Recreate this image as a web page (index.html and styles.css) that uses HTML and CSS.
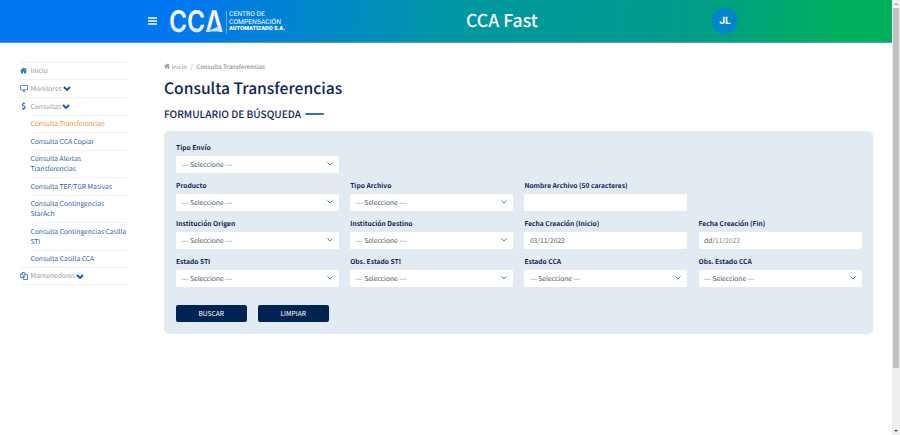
FILE: index.html
```
<!DOCTYPE html>
<html lang="es">
<head>
<meta charset="utf-8">
<title>CCA Fast</title>
<link rel="stylesheet" href="styles.css">
</head>
<body>
<svg class="defs" width="0" height="0">
  <symbol id="home" viewBox="0 0 16 14"><path d="M8 0 0 7l1 1.3L8 2.2l7 6.1L16 7l-2.500-2.200V1h-2v2zM8 3.500 2.500 8.300V14h4V9.500h3V14h4V8.300z" fill="currentColor"/></symbol>
  <symbol id="chev" viewBox="0 0 14 9"><path d="M1.500 2 7 7l5.500-5" fill="none" stroke="currentColor" stroke-width="3.600"/></symbol>
  <symbol id="thin" viewBox="0 0 6 4"><path d="M.7.7 3 3 5.300.7" fill="none" stroke="currentColor" stroke-width="1" stroke-linecap="round"/></symbol>
</svg>
<div class="app">
  <div class="page">
    <header class="header">
      <svg class="burger" viewBox="0 0 9 8"><path d="M0 1h9M0 4h9M0 7h9" stroke="#fff" stroke-width="1.500"/></svg>
      <svg class="logo" viewBox="0 0 54 26">
        <defs><linearGradient id="silver" x1="0" y1="0" x2="0" y2="1"><stop offset=".45" stop-color="#fff"/><stop offset="1" stop-color="#cbd5e3"/></linearGradient></defs>
        <text x="-1" y="23.500" textLength="54" lengthAdjust="spacingAndGlyphs" fill="url(#silver)">CCΛ</text>
        <path d="M37 23.500 47 19l3.500 4.500z" fill="#d5dce6"/>
      </svg>
      <div class="logo-text"><span>CENTRO DE</span><span>COMPENSACIÓN</span><b>AUTOMATIZADO S.A.</b></div>
      <div class="brand">CCA Fast</div>
      <div class="avatar">JL</div>
    </header>
    <div class="body">
      <nav class="side">
        <div class="item"><svg class="ic"><use href="#home"/></svg>Inicio</div>
        <div class="item"><svg class="ic monitor" viewBox="0 0 9 8"><path d="M.5.5h8v5h-8zM3 7.300h3M4.500 5.500v2" fill="none" stroke="currentColor" stroke-width=".8"/></svg>Monitores<svg class="chev"><use href="#chev"/></svg></div>
        <div class="item"><span class="ic dollar">$</span>Consultas<svg class="chev"><use href="#chev"/></svg></div>
        <div class="sub">
          <a class="on">Consulta Transferencias</a>
          <a>Consulta CCA Copiar</a>
          <a>Consulta Alertas<br>Transferencias</a>
          <a>Consulta TEF/TGR Masivas</a>
          <a>Consulta Contingencias<br>StarAch</a>
          <a>Consulta Contingencias Casilla<br>STI</a>
          <a>Consulta Casilla CCA</a>
        </div>
        <div class="item last"><svg class="ic copy" viewBox="0 0 8 8"><path d="M4.500 5.500H.5V2.300L2.300.5h2.200V2M.5 2.500h2v-2M3.200 4 5 2.200h2.500v5.300H3.200zM3.200 4.200H5v-2" fill="none" stroke="currentColor" stroke-width=".7"/></svg>Mantenedores<svg class="chev"><use href="#chev"/></svg></div>
      </nav>
      <main class="main">
        <div class="crumbs"><svg><use href="#home"/></svg><span>Inicio</span><i>/</i><b>Consulta Transferencias</b></div>
        <h1>Consulta Transferencias</h1>
        <h2>FORMULARIO DE BÚSQUEDA<span class="dash"></span></h2>
        <form class="panel">
          <div class="grid">
            <div class="field first"><label>Tipo Envío</label><div class="box">--- Seleccione ---<svg><use href="#thin"/></svg></div></div>
            <div class="field"><label>Producto</label><div class="box">--- Seleccione ---<svg><use href="#thin"/></svg></div></div>
            <div class="field"><label>Tipo Archivo</label><div class="box">--- Seleccione ---<svg><use href="#thin"/></svg></div></div>
            <div class="field wide"><label>Nombre Archivo (50 caracteres)</label><div class="box"></div></div>
            <div class="field"><label>Institución Origen</label><div class="box">--- Seleccione ---<svg><use href="#thin"/></svg></div></div>
            <div class="field"><label>Institución Destino</label><div class="box">--- Seleccione ---<svg><use href="#thin"/></svg></div></div>
            <div class="field"><label>Fecha Creación (Inicio)</label><div class="box">03/11/2023</div></div>
            <div class="field"><label>Fecha Creación (Fin)</label><div class="box">dd/<span class="dim">11/2023</span></div></div>
            <div class="field"><label>Estado STI</label><div class="box">--- Seleccione ---<svg><use href="#thin"/></svg></div></div>
            <div class="field"><label>Obs. Estado STI</label><div class="box">--- Seleccione ---<svg><use href="#thin"/></svg></div></div>
            <div class="field"><label>Estado CCA</label><div class="box">--- Seleccione ---<svg><use href="#thin"/></svg></div></div>
            <div class="field"><label>Obs. Estado CCA</label><div class="box">--- Seleccione ---<svg><use href="#thin"/></svg></div></div>
          </div>
          <div class="actions"><span class="btn">BUSCAR</span><span class="btn">LIMPIAR</span></div>
        </form>
      </main>
    </div>
  </div>
  <div class="scroll"><svg viewBox="0 0 4 2"><path d="M0 2 2 0l2 2z" fill="#999"/></svg><div class="thumb"></div><svg viewBox="0 0 4 2"><path d="M0 0h4L2 2z" fill="#444"/></svg></div>
</div>
</body>
</html>
```
FILE: styles.css
```
* { box-sizing: border-box; }
body { margin: 0; background: #fff; overflow: hidden; font-family: "Noto Sans CJK SC", sans-serif; text-rendering: geometricPrecision; }
.defs { position: absolute; }
.app { display: flex; height: 435px; }
.page { width: 892px; }
.header { height: 43px; display: flex; align-items: flex-start; background: linear-gradient(97deg, #0077f0 0%, #0077f0 20%, #0098a0 52%, #009c8c 76%, #00b05c 95%); border-bottom: 1px solid #5b9fd6; color: #fff; white-space: nowrap; }
.burger { width: 9px; height: 8px; margin: 16.500px 0 0 148px; }
.logo { width: 54px; height: 26px; margin: 8px 0 0 13px; overflow: visible; }
.logo text { font: 600 30px Inter, sans-serif; }
.logo-text { margin: 11px 0 0 2px; padding-left: 2px; border-left: 1px solid rgba(255,255,255,.4); height: 23px; width: 60px; font: 6.700px/7.700px Roboto, sans-serif; letter-spacing: .05px; display: flex; flex-direction: column; }
.logo-text b { font-size: 5.700px; font-weight: 900; letter-spacing: -.02px; }
.brand { margin: 7px 0 0 180px; width: 246px; font-weight: 500; font-size: 17.700px; line-height: 27px; }
.avatar { width: 26px; height: 26px; margin-top: 8px; border-radius: 50%; background: #0584cb; font: 700 10px/26px Inter, sans-serif; text-align: center; }
.body { display: flex; }
.side { margin: 18.500px 0 0 20px; width: 107px; font-size: 6.700px; line-height: 9.800px; color: #999ba5; white-space: nowrap; }
.item { display: flex; align-items: center; height: 17.800px; border-top: 1px solid #f0f0f0; }
.last { border-bottom: 1px solid #f0f0f0; }
.ic { width: 7px; height: 7px; margin-right: 3.500px; color: #1763ab; }
.monitor { width: 8px; margin-right: 2.500px; }
.copy { width: 8px; height: 8px; margin-right: 2.500px; }
.dollar { font-size: 8px; font-weight: 700; line-height: 7px; text-align: center; }
.chev { width: 8px; height: 5px; margin-left: 1px; color: #0c58a8; }
.sub { margin-left: 10.500px; color: #1f65a6; }
.sub a { display: block; padding: 3.400px 0; border-top: 1px solid #f0f0f0; }
.sub .on { color: #f18e1d; }
.main { margin: 18px 0 0 37px; width: 709px; color: #0b2559; }
.crumbs { display: flex; align-items: center; height: 10px; font-size: 6px; color: #8d93a1; }
.crumbs svg { width: 6px; height: 6px; margin-right: 1.500px; }
.crumbs i { font-style: normal; margin: 0 3.500px; }
.crumbs b { font-weight: 500; }
h1 { margin: 5px 0 0; font-size: 15.600px; line-height: 24px; font-weight: 500; }
h2 { margin: 6px 0 0; font-size: 10.100px; line-height: 15px; font-weight: 500; display: flex; align-items: center; }
.dash { width: 19px; height: 2px; margin-left: 4.500px; border-radius: 1px; background: #3b6db5; }
.panel { margin-top: 9.500px; height: 203px; padding: 11.800px 12px; border-radius: 5px; background: #e3ebf2; }
.grid { display: grid; grid-template-columns: repeat(4, 163px); column-gap: 11.200px; grid-auto-rows: 37.900px; }
.first { grid-column: 1 / -1; width: 163px; }
.wide { grid-column: 3 / 5; width: 163px; }
label { display: block; font-size: 6.700px; line-height: 10px; font-weight: 700; margin-bottom: 3.700px; white-space: nowrap; }
.box { display: flex; align-items: center; height: 17px; padding: 0 6px 0 5.500px; background: #fff; border-radius: 1.500px; font-size: 6.700px; color: #50566a; white-space: pre; }
.box svg { width: 6px; height: 4px; margin-left: auto; color: #2da576; }
.dim { color: #81858f; }
.actions { display: flex; gap: 11.500px; margin-top: 11px; }
.btn { width: 70.500px; height: 17px; border-radius: 2px; background: #012353; color: #fff; font-size: 6.700px; line-height: 17px; text-align: center; }
.scroll { width: 8px; background: #efefef; display: flex; flex-direction: column; align-items: center; justify-content: space-between; padding: 3px 0; }
.scroll svg { width: 4px; height: 2px; }
.thumb { width: 6px; height: 360px; background: #c0c0c0; margin: 3px 0 auto; }
```
